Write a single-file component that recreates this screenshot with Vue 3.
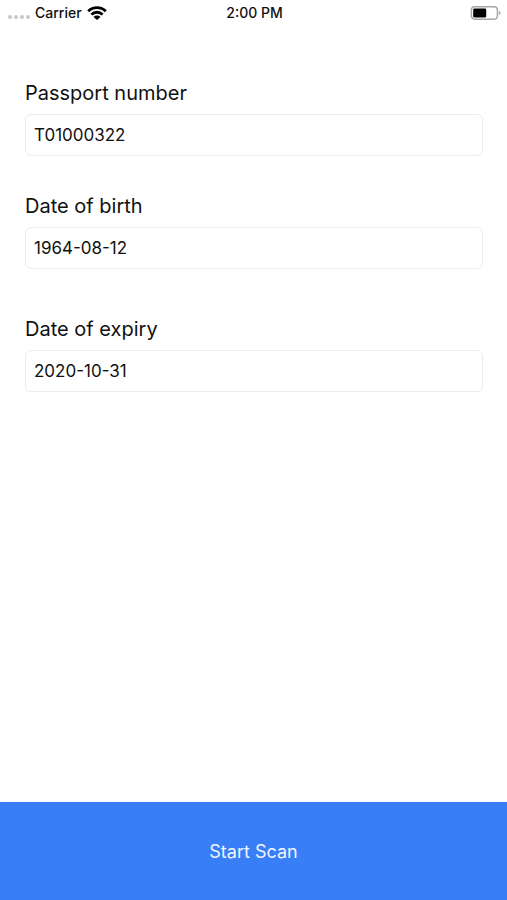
<script setup>
import { ref } from 'vue'

const fields = ref([
  { id: 'passport', label: 'Passport number', value: 'T01000322' },
  { id: 'birth', label: 'Date of birth', value: '1964-08-12' },
  { id: 'expiry', label: 'Date of expiry', value: '2020-10-31' },
])
</script>

<template>
  <div class="screen">
    <header class="status">
      <div class="carrier">
        <span class="dots"><i v-for="n in 4" :key="n"></i></span>
        <span>Carrier</span>
        <svg class="wifi" viewBox="0 0 20 14" aria-hidden="true">
          <path d="M1.2 5.2a12.4 12.4 0 0 1 17.6 0" />
          <path d="M4.4 8.6a7.8 7.8 0 0 1 11.2 0" />
          <path class="solid" d="M10 14 6.5 10.9a4.9 4.9 0 0 1 7 0z" />
        </svg>
      </div>
      <time>2:00 PM</time>
      <svg class="battery" viewBox="0 0 31 14" aria-hidden="true">
        <rect class="shell" x="1.4" y="0.8" width="26" height="12.4" rx="3.4" />
        <rect x="3.2" y="2.4" width="13" height="9.2" rx="1.4" />
        <path class="cap" d="M28.8 4.9q1.8.6 1.8 2.1t-1.8 2.1z" />
      </svg>
    </header>
    <form id="scan" class="form" @submit.prevent>
      <div v-for="f in fields" :key="f.id" class="field" :class="f.id">
        <label :for="f.id">{{ f.label }}</label>
        <input :id="f.id" v-model="f.value" type="text" />
      </div>
    </form>
    <button class="scan" type="submit" form="scan">Start Scan</button>
  </div>
</template>

<style>
body {
  background: #fff;
}
</style>

<style scoped>
.screen {
  min-height: 100vh;
  display: flex;
  flex-direction: column;
  font-family: Inter, "Liberation Sans", sans-serif;
  color: #111;
}
.status {
  display: grid;
  grid-template-columns: 1fr auto 1fr;
  align-items: center;
  height: 26px;
  padding: 0 6px 0 8px;
  font-size: 14px;
  line-height: 16px;
  font-weight: 500;
}
.carrier {
  display: flex;
  align-items: center;
  gap: 5px;
}
.dots {
  display: flex;
  gap: 2px;
  padding-top: 8px;
}
.dots i {
  width: 4px;
  height: 4px;
  border-radius: 50%;
  background: #c8c8c8;
}
.wifi {
  width: 20px;
  height: 14px;
  fill: none;
  stroke: #000;
  stroke-width: 2.8;
}
.wifi .solid {
  fill: #000;
  stroke: none;
}
.battery {
  justify-self: end;
  width: 31px;
  height: 14px;
}
.battery .shell {
  fill: none;
  stroke: #a6a6a6;
  stroke-width: 1.4;
}
.battery .cap {
  fill: #a6a6a6;
}
.form {
  flex: 1;
  display: flex;
  flex-direction: column;
  padding: 52px 24px 32px 25px;
}
.field {
  display: flex;
  flex-direction: column;
  gap: 6px;
}
.birth {
  margin-top: 35px;
}
.expiry {
  margin-top: 45px;
}
label {
  font-size: 20px;
  line-height: 30px;
}
input {
  box-sizing: border-box;
  width: 100%;
  height: 42px;
  padding: 0 8px;
  border: 1px solid #ebebeb;
  border-radius: 6px;
  background: #fff;
  color: #111;
  font: inherit;
  font-size: 17px;
}
.scan {
  height: 98px;
  border: 0;
  background: #387ef6;
  color: #f0f5ff;
  font: inherit;
  font-size: 18px;
}
</style>
